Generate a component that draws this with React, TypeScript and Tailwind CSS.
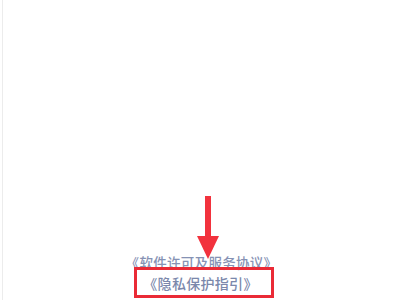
export default function App() {
  return (
    <div className="relative w-[400px] h-[300px] bg-white overflow-hidden font-['Noto_Sans_CJK_SC',sans-serif]">
      <div className="absolute left-[2px] top-0 h-full w-px bg-[#ececec]" />
      <div className="flex flex-col items-center pt-[255px] pl-[3px]">
        <p className="text-[13.5px] leading-[14px] font-medium text-[#8692b4] tracking-[0.3px]">《软件许可及服务协议》</p>
        <div className="mt-[-2px] ml-[4px] flex items-center justify-center w-[140px] h-[31px] border-[3px] border-[#ea2a36]">
          <span className="mr-[6px] text-[14px] leading-[16px] font-medium text-[#7b88ab] tracking-[0.3px]">《隐私保护指引》</span>
        </div>
      </div>
      {/* annotation arrow */}
      <svg className="absolute left-[196px] top-[196px]" width="24" height="64" viewBox="0 0 24 64">
        <rect x="9" y="0" width="6" height="42" fill="#f2323d" />
        <path d="M1 40 L23 40 L12 63 Z" fill="#f2323d" />
      </svg>
    </div>
  )
}
